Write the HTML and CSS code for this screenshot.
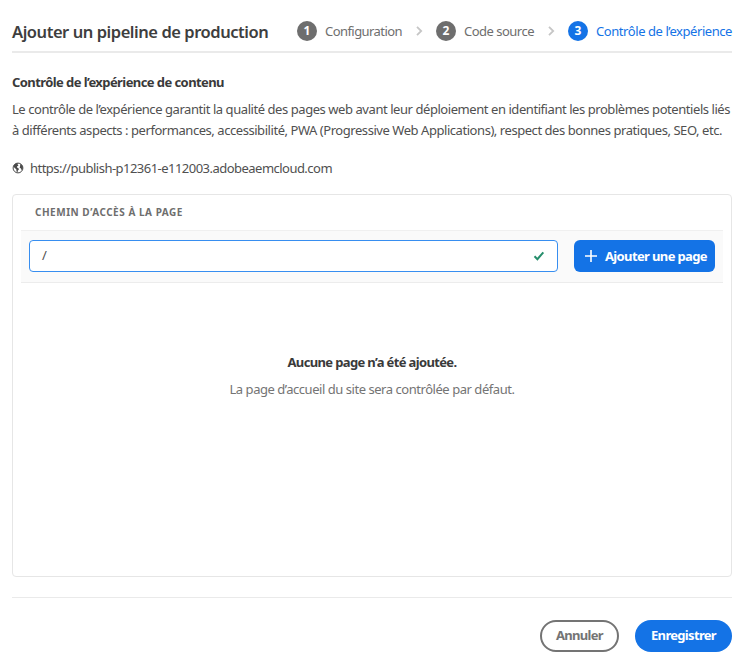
FILE: index.html
```
<!DOCTYPE html>
<html lang="fr">
<head>
<meta charset="utf-8">
<title>Ajouter un pipeline de production</title>
<link rel="stylesheet" href="styles.css">
</head>
<body>
<main class="dialog">
  <header class="header">
    <h1 class="title">Ajouter un pipeline de production</h1>
    <ol class="steps">
      <li class="step"><span class="badge">1</span><span class="step-config">Configuration</span></li>
      <li class="separator"><svg width="7" height="10" viewBox="0 0 7 10"><path d="M1 .8 5.2 5 1 9.200"/></svg></li>
      <li class="step"><span class="badge">2</span><span class="step-code">Code source</span></li>
      <li class="separator"><svg width="7" height="10" viewBox="0 0 7 10"><path d="M1 .8 5.2 5 1 9.200"/></svg></li>
      <li class="step active"><span class="badge">3</span><span class="step-audit">Contrôle de l’expérience</span></li>
    </ol>
  </header>
  <h2 class="subtitle">Contrôle de l’expérience de contenu</h2>
  <p class="description"><span class="line-one">Le contrôle de l’expérience garantit la qualité des pages web avant leur déploiement en identifiant les problèmes potentiels liés</span><br>à différents aspects : performances, accessibilité, PWA (Progressive Web Applications), respect des bonnes pratiques, SEO, etc.</p>
  <div class="site">
    <svg class="globe" width="12" height="12" viewBox="0 0 12 12"><circle cx="6" cy="6" r="4.900"/><path d="M2 2.700 4.200 1.200 6.300 1.500 5.600 2.600 6.500 3.700 5.200 4.300 4.900 5.500 6.200 6.100 7 7.200 5.900 8.600 5.500 10.500 4.500 9.600 4.300 7.300 2.700 6 1.500 4.500ZM8 2.200 9.500 2.400 10.800 4.700 10.700 7 9.700 8.300 8.900 6.600 7.600 5.500 8.200 4Z"/></svg>
    <span>https://publish-p12361-e112003.adobeaemcloud.com</span>
  </div>
  <section class="panel">
    <h3 class="column-title">CHEMIN D’ACCÈS À LA PAGE</h3>
    <div class="entry">
      <label class="field">
        <span>/</span>
        <svg width="12" height="10" viewBox="0 0 12 10"><path d="M1.500 5.300 4.400 8.200 10.300 1.300"/></svg>
      </label>
      <button class="add" type="button">
        <svg width="12" height="12" viewBox="0 0 12 12"><path d="M6 0V12M0 6H12"/></svg>
        <span>Ajouter une page</span>
      </button>
    </div>
    <div class="empty">
      <p class="empty-title">Aucune page n’a été ajoutée.</p>
      <p class="empty-text">La page d’accueil du site sera contrôlée par défaut.</p>
    </div>
  </section>
  <footer class="footer">
    <button class="pill outline" type="button">Annuler</button>
    <button class="pill primary" type="button">Enregistrer</button>
  </footer>
</main>
</body>
</html>
```
FILE: styles.css
```
* { box-sizing: border-box; }
body {
  margin: 0;
  background: #fff;
  color: #505050;
  font: 13px/22px "Noto Sans", "Open Sans", sans-serif;
}
h1, h2, h3, p, ol { margin: 0; padding: 0; }
svg { display: block; flex: none; fill: none; }
button { font: inherit; border: 0; padding: 0; }
.dialog {
  width: 720px;
  height: 663px;
  margin: 0 12px;
  display: flex;
  flex-direction: column;
  white-space: nowrap;
}
.header {
  flex: none;
  height: 53px;
  padding-top: 10px;
  display: flex;
  align-items: center;
  justify-content: space-between;
  border-bottom: 2px solid #eaeaea;
}
.title {
  padding-top: 2px;
  font-size: 16.500px;
  font-weight: 600;
  line-height: 24px;
  letter-spacing: -.45px;
  color: #3e3e3e;
}
.steps { width: 435px; display: flex; align-items: center; list-style: none; }
.step { display: flex; align-items: center; gap: 8px; color: #6e6e6e; }
.badge {
  width: 20px;
  height: 20px;
  border-radius: 50%;
  background: #6e6e6e;
  color: #fff;
  font-size: 12px;
  font-weight: 700;
  line-height: 19px;
  text-align: center;
}
.step-config { width: 77px; letter-spacing: -.56px; }
.step-code { width: 70px; letter-spacing: -.51px; }
.step-audit { width: 136px; letter-spacing: -.43px; }
.active { color: #1473e6; }
.active .badge { background: #1473e6; }
.separator { width: 34px; padding-left: 14px; }
.separator svg { stroke: #c6c6c6; stroke-width: 1.8; }
.subtitle {
  margin-top: 18px;
  font-size: 13px;
  font-weight: 700;
  letter-spacing: -.578px;
  color: #3a3a3a;
}
.description { margin-top: 6px; line-height: 21px; letter-spacing: -.447px; }
.line-one { letter-spacing: -.438px; }
.site {
  margin-top: 16px;
  display: flex;
  align-items: center;
  gap: 6px;
  letter-spacing: -.526px;
}
.globe { stroke: #4b4b4b; stroke-width: 1; }
.globe path { fill: #4b4b4b; stroke: none; }
.panel {
  flex: none;
  height: 383px;
  margin-top: 15px;
  padding: 0 8px;
  border: 1px solid #e6e6e6;
  border-radius: 4px;
}
.column-title {
  height: 35px;
  padding-left: 14px;
  font-size: 10px;
  font-weight: 700;
  line-height: 34px;
  letter-spacing: .521px;
  color: #6e6e6e;
}
.entry {
  height: 53px;
  padding: 9px 8px 0;
  display: flex;
  align-items: flex-start;
  gap: 16px;
  background: #fafafa;
  border-top: 1px solid #f0f0f0;
  border-bottom: 1px solid #ececec;
}
.field {
  flex: none;
  width: 529px;
  height: 32px;
  padding: 0 12px;
  display: flex;
  align-items: center;
  justify-content: space-between;
  background: #fff;
  border: 1px solid #378ef0;
  border-radius: 4px;
}
.field span { padding-bottom: 2px; }
.field svg { stroke: #268e6c; stroke-width: 2; }
.add {
  flex: none;
  width: 141px;
  height: 32px;
  padding-left: 11px;
  display: flex;
  align-items: center;
  gap: 8px;
  border-radius: 6px;
  background: #1473e6;
  color: #fff;
  font-weight: 700;
  letter-spacing: -.629px;
}
.add svg { stroke: #fff; stroke-width: 1.6; }
.empty { padding-top: 68px; text-align: center; }
.empty-title { font-weight: 700; letter-spacing: -.641px; color: #3a3a3a; }
.empty-text { margin-top: 5px; letter-spacing: -.457px; color: #747474; }
.footer {
  margin-top: 20px;
  height: 55px;
  padding-top: 22px;
  display: flex;
  justify-content: flex-end;
  gap: 16px;
  border-top: 1px solid #eaeaea;
}
.pill {
  flex: none;
  height: 32px;
  padding-bottom: 2px;
  border-radius: 16px;
  font-weight: 700;
  line-height: 28px;
  letter-spacing: -.68px;
}
.outline { width: 79px; border: 2px solid #747474; background: #fff; color: #747474; line-height: 24px; }
.primary { width: 97px; background: #1473e6; color: #fff; }
```
